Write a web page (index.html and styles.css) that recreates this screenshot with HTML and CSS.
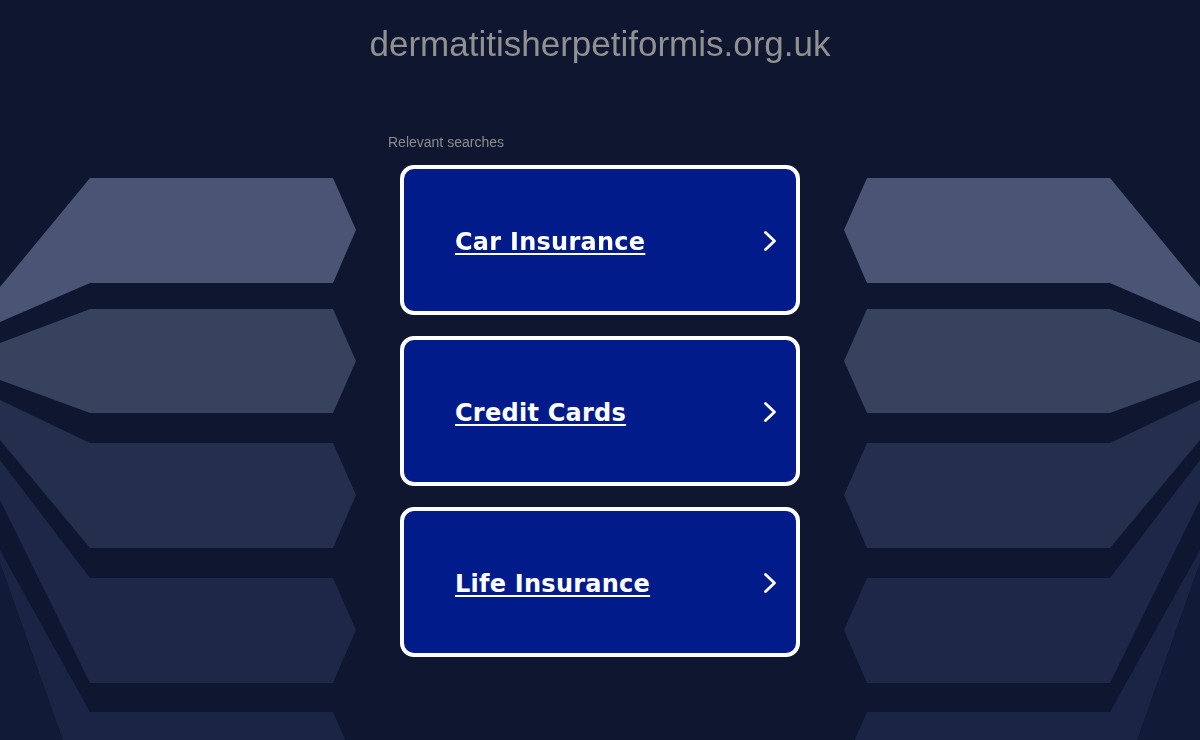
FILE: index.html
```html
<!DOCTYPE html>
<html lang="en">
<head>
    <meta charset="UTF-8">
    <meta name="viewport" content="width=device-width, initial-scale=1.0">
    <title>dermatitisherpetiformis.org.uk</title>
    <link rel="stylesheet" href="styles.css">
</head>
<body>
<svg class="fondo" viewBox="0 0 1200 740" preserveAspectRatio="none" aria-hidden="true">
    <defs>
        <g id="abanico">
            <polygon points="0,287 90,178 333,178 356,230 333,283 90,283 0,322" fill="#4a5575"/>
            <polygon points="0,343 90,309 333,309 356,361 333,413 90,413 0,380" fill="#37425f"/>
            <polygon points="0,400 90,443 333,443 356,495 333,548 90,548 0,440" fill="#242f4e"/>
            <polygon points="0,460 90,578 333,578 356,630 333,683 90,683 0,500" fill="#1d2747"/>
            <polygon points="0,550 90,712 333,712 356,764 333,817 90,817 0,563" fill="#1a2445"/>
            <polygon points="0,563 90,817 0,817" fill="#111a36"/>
        </g>
    </defs>
    <use href="#abanico"/>
    <use href="#abanico" transform="translate(1200,0) scale(-1,1)"/>
</svg>

<div class="pagina">
    <h1 class="dominio">dermatitisherpetiformis.org.uk</h1>

    <div class="busquedas">
        <p class="etiqueta">Relevant searches</p>

        <a class="tarjeta" href="#">
            <span>Car Insurance</span>
            <svg class="flecha" viewBox="0 0 14 22"><polyline points="2.5,2.5 11.5,11 2.5,19.5"/></svg>
        </a>
        <a class="tarjeta" href="#">
            <span>Credit Cards</span>
            <svg class="flecha" viewBox="0 0 14 22"><polyline points="2.5,2.5 11.5,11 2.5,19.5"/></svg>
        </a>
        <a class="tarjeta" href="#">
            <span>Life Insurance</span>
            <svg class="flecha" viewBox="0 0 14 22"><polyline points="2.5,2.5 11.5,11 2.5,19.5"/></svg>
        </a>
    </div>
</div>
</body>
</html>
```

FILE: styles.css
```css
html, body {
    height: 100%;
}

body {
    margin: 0;
    background-color: #0e1630;
    font-family: "Liberation Sans", Arial, sans-serif;
    overflow: hidden;
}

.fondo {
    position: fixed;
    top: 0;
    left: 0;
    width: 100%;
    height: 100%;
    z-index: 0;
}

.pagina {
    position: relative;
    z-index: 1;
    display: flex;
    flex-direction: column;
    align-items: center;
}

.dominio {
    margin: 0;
    padding-top: 24px;
    font-size: 35px;
    line-height: 40px;
    font-weight: normal;
    color: #919191;
}

.busquedas {
    width: 424px;
    margin-top: 70px;
    display: flex;
    flex-direction: column;
    align-items: center;
    gap: 21px;
}

.etiqueta {
    align-self: flex-start;
    margin: 0 0 -6px 0;
    font-size: 14px;
    line-height: 16px;
    color: #8c8c8c;
}

.tarjeta {
    box-sizing: border-box;
    width: 400px;
    height: 150px;
    padding: 3px 19px 0 51px;
    display: flex;
    align-items: center;
    justify-content: space-between;
    background-color: #011b8b;
    border: 4px solid #ffffff;
    border-radius: 14px;
    color: #ffffff;
    font-family: "DejaVu Sans", Verdana, sans-serif;
    font-weight: bold;
    font-size: 24px;
    letter-spacing: 0.25px;
    text-decoration: none;
}

.tarjeta span {
    text-decoration: underline;
    text-decoration-thickness: 2px;
    text-underline-offset: 3px;
}

.flecha {
    width: 14px;
    height: 22px;
    margin-top: -1px;
}

.flecha polyline {
    fill: none;
    stroke: #ffffff;
    stroke-width: 2.8;
    stroke-linecap: round;
    stroke-linejoin: round;
}
```
